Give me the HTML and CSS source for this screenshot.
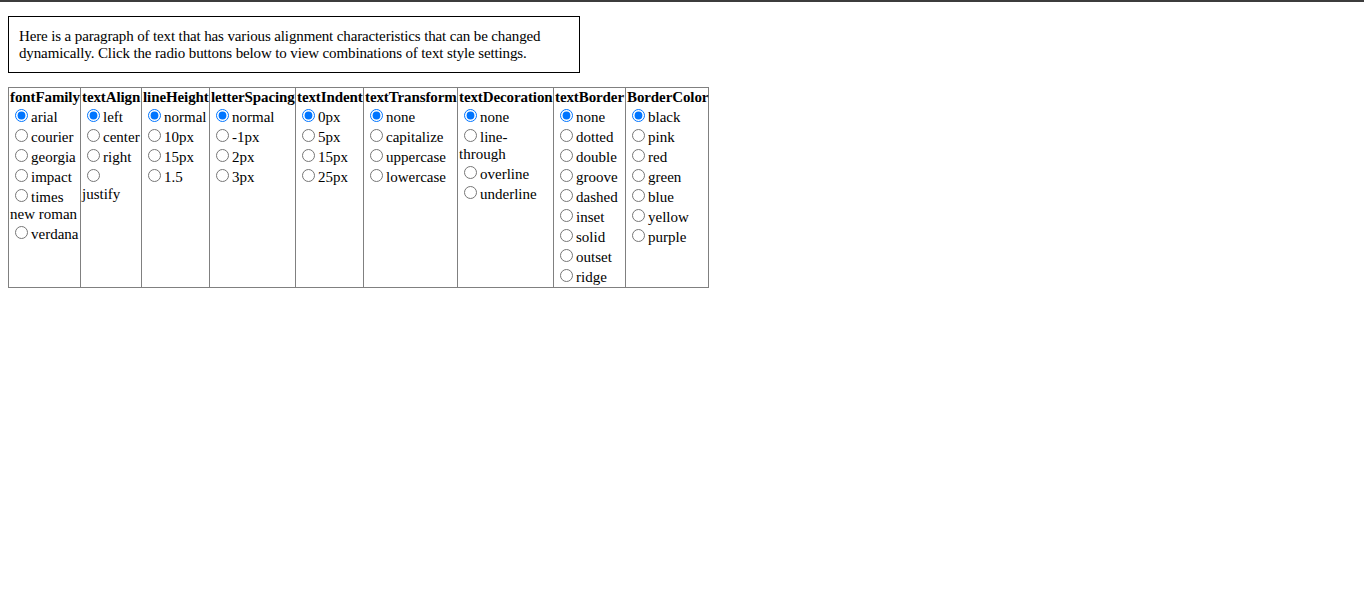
FILE: index.html
```html
<!DOCTYPE html>
<html>
<head>
<meta charset="utf-8">
<link rel="stylesheet" href="styles.css">
</head>
<body>
<div class="topbar"></div>
<div class="page">
  <p class="sample">Here is a paragraph of text that has various alignment characteristics that can be changed dynamically. Click the radio buttons below to view combinations of text style settings.</p>
  <table class="controls">
    <colgroup>
      <col class="c1"><col class="c2"><col class="c3"><col class="c4"><col class="c5"><col class="c6"><col class="c7"><col class="c8"><col class="c9">
    </colgroup>
    <tr>
      <td><b class="head">fontFamily</b><br>
        <label><input type="radio" name="ff" checked>arial</label><br>
        <label><input type="radio" name="ff">courier</label><br>
        <label><input type="radio" name="ff">georgia</label><br>
        <label><input type="radio" name="ff">impact</label><br>
        <label><input type="radio" name="ff">times new roman</label><br>
        <label><input type="radio" name="ff">verdana</label>
      </td>
      <td><b class="head">textAlign</b><br>
        <label><input type="radio" name="ta" checked>left</label><br>
        <label><input type="radio" name="ta">center</label><br>
        <label><input type="radio" name="ta">right</label><br>
        <label><input type="radio" name="ta">justify</label>
      </td>
      <td><b class="head">lineHeight</b><br>
        <label><input type="radio" name="lh" checked>normal</label><br>
        <label><input type="radio" name="lh">10px</label><br>
        <label><input type="radio" name="lh">15px</label><br>
        <label><input type="radio" name="lh">1.5</label>
      </td>
      <td><b class="head">letterSpacing</b><br>
        <label><input type="radio" name="ls" checked>normal</label><br>
        <label><input type="radio" name="ls">-1px</label><br>
        <label><input type="radio" name="ls">2px</label><br>
        <label><input type="radio" name="ls">3px</label>
      </td>
      <td><b class="head">textIndent</b><br>
        <label><input type="radio" name="ti" checked>0px</label><br>
        <label><input type="radio" name="ti">5px</label><br>
        <label><input type="radio" name="ti">15px</label><br>
        <label><input type="radio" name="ti">25px</label>
      </td>
      <td><b class="head">textTransform</b><br>
        <label><input type="radio" name="tt" checked>none</label><br>
        <label><input type="radio" name="tt">capitalize</label><br>
        <label><input type="radio" name="tt">uppercase</label><br>
        <label><input type="radio" name="tt">lowercase</label>
      </td>
      <td><b class="head">textDecoration</b><br>
        <label><input type="radio" name="td" checked>none</label><br>
        <label><input type="radio" name="td">line-through</label><br>
        <label><input type="radio" name="td">overline</label><br>
        <label><input type="radio" name="td">underline</label>
      </td>
      <td><b class="head">textBorder</b><br>
        <label><input type="radio" name="tb" checked>none</label><br>
        <label><input type="radio" name="tb">dotted</label><br>
        <label><input type="radio" name="tb">double</label><br>
        <label><input type="radio" name="tb">groove</label><br>
        <label><input type="radio" name="tb">dashed</label><br>
        <label><input type="radio" name="tb">inset</label><br>
        <label><input type="radio" name="tb">solid</label><br>
        <label><input type="radio" name="tb">outset</label><br>
        <label><input type="radio" name="tb">ridge</label>
      </td>
      <td><b class="head">BorderColor</b><br>
        <label><input type="radio" name="bc" checked>black</label><br>
        <label><input type="radio" name="bc">pink</label><br>
        <label><input type="radio" name="bc">red</label><br>
        <label><input type="radio" name="bc">green</label><br>
        <label><input type="radio" name="bc">blue</label><br>
        <label><input type="radio" name="bc">yellow</label><br>
        <label><input type="radio" name="bc">purple</label>
      </td>
    </tr>
  </table>
</div>
</body>
</html>
```

FILE: styles.css
```css
html, body {
  margin: 0;
  padding: 0;
  background: #ffffff;
}

body {
  font-family: "Liberation Serif", "Times New Roman", serif;
  font-size: 15px;
  color: #000000;
}

.topbar {
  height: 2px;
  background: #3c3c3c;
}

.page {
  padding: 14px 8px 8px 8px;
}

.sample {
  margin: 0 0 14px 0;
  width: 550px;
  padding: 11px 10px 10px 10px;
  border: 1px solid #000000;
  font-size: 15px;
  letter-spacing: -0.13px;
}

.controls {
  border-collapse: collapse;
  border: 1px solid #808080;
  table-layout: fixed;
  width: 701px;
  font-size: 15px;
}

.controls td {
  border: 1px solid #808080;
  padding: 1px;
  vertical-align: top;
}

.head {
  letter-spacing: -0.1px;
}

.controls input[type="radio"] {
  margin: 3px 3px 0 5px;
  width: 13px;
  height: 13px;
}

.c1 { width: 72px; }
.c2 { width: 61px; }
.c3 { width: 68px; }
.c4 { width: 86px; }
.c5 { width: 68px; }
.c6 { width: 94px; }
.c7 { width: 96px; }
.c8 { width: 72px; }
.c9 { width: 83px; }
```
